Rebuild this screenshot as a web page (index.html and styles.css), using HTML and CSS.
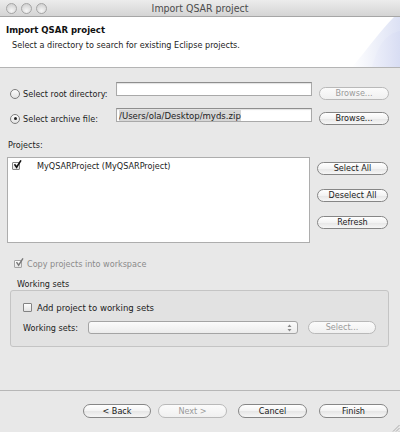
FILE: index.html
```html
<!DOCTYPE html>
<html>
<head>
<meta charset="utf-8">
<title>Import QSAR project</title>
<link rel="stylesheet" href="styles.css">
</head>
<body>
<div class="window">
  <div class="titlebar">
    <div class="lights"><span class="light"></span><span class="light"></span><span class="light"></span></div>
    <div class="title">Import QSAR project</div>
    <div></div>
  </div>
  <div class="header">
    <div class="h-text">
      <div class="h-title">Import QSAR project</div>
      <div class="h-desc">Select a directory to search for existing Eclipse projects.</div>
    </div>
    <svg class="swoosh" width="70" height="50" viewBox="0 0 70 50">
      <defs>
        <linearGradient id="g1" x1="0" y1="0" x2="1" y2="0">
          <stop offset="0" stop-color="#ffffff"/>
          <stop offset="1" stop-color="#dce1f4"/>
        </linearGradient>
        <linearGradient id="g2" x1="0" y1="0" x2="1" y2="0">
          <stop offset="0" stop-color="#eef0fa"/>
          <stop offset="1" stop-color="#d8ddf3"/>
        </linearGradient>
      </defs>
      <path d="M70 0 L64 0 C50 14 36 34 22 50 L70 50 Z" fill="url(#g1)"/>
      <path d="M70 14 C58 16 48 26 42 50 L70 50 Z" fill="url(#g2)"/>
    </svg>
  </div>
  <div class="content">
    <div class="src-row">
      <div class="opt"><span class="radio"></span><span>Select root directory:</span></div>
      <div class="field field-1"></div>
      <div class="btn disabled">Browse...</div>
    </div>
    <div class="src-row">
      <div class="opt"><span class="radio checked"></span><span>Select archive file:</span></div>
      <div class="field field-2"><span class="sel">/Users/ola/Desktop/myds.zip</span></div>
      <div class="btn">Browse...</div>
    </div>
    <div class="projects-label">Projects:</div>
    <div class="projects">
      <div class="list">
        <div class="item"><span class="check checked"><svg width="9" height="9" viewBox="0 0 9 9"><path d="M1.5 4.2 L3.6 7.2 L8 0.4" fill="none" stroke="#111" stroke-width="1.6"/></svg></span><span class="item-text">MyQSARProject (MyQSARProject)</span></div>
      </div>
      <div class="side-buttons">
        <div class="btn">Select All</div>
        <div class="btn">Deselect All</div>
        <div class="btn">Refresh</div>
      </div>
    </div>
    <div class="copy-row"><span class="check small checked dim"><svg width="9" height="9" viewBox="0 0 9 9"><path d="M1.5 4.2 L3.6 7.2 L8 0.4" fill="none" stroke="#777" stroke-width="1.4"/></svg></span><span>Copy projects into workspace</span></div>
    <div class="ws-label">Working sets</div>
    <div class="group">
      <div class="add-row"><span class="check"></span><span>Add project to working sets</span></div>
      <div class="ws-row">
        <span class="ws-text">Working sets:</span>
        <div class="combo"><span class="stepper"><svg width="5" height="8" viewBox="0 0 5 8"><path d="M0.5 3 L2.5 0.5 L4.5 3 Z M0.5 5 L2.5 7.5 L4.5 5 Z" fill="#8a8a8a"/></svg></span></div>
        <div class="btn disabled">Select...</div>
      </div>
    </div>
  </div>
  <div class="footer">
    <div class="btn back">&lt; Back</div>
    <div class="btn disabled next">Next &gt;</div>
    <div class="btn cancel">Cancel</div>
    <div class="btn finish">Finish</div>
  </div>
  <svg class="grip" width="9" height="9" viewBox="0 0 9 9"><path d="M8.5 2 L2 8.5 M8.5 5 L5 8.5 M8.5 8 L8 8.5" stroke="#9c9c9c" stroke-width="0.8"/></svg>
</div>
</body>
</html>
```

FILE: styles.css
```css
* { box-sizing: border-box; margin: 0; padding: 0; }
html, body { width: 400px; height: 432px; overflow: hidden; }
body {
  font-family: "DejaVu Sans Condensed", "DejaVu Sans", sans-serif;
  font-size: 9px;
  color: #1c1c1c;
  background: #e8e8e8;
}
.window { display: flex; flex-direction: column; height: 432px; position: relative; }

.titlebar {
  height: 17px;
  display: grid;
  grid-template-columns: 1fr auto 1fr;
  align-items: center;
  background: linear-gradient(#ececec, #d4d4d4);
  border-bottom: 1px solid #a6a6a6;
}
.lights { display: flex; gap: 4px; padding-left: 6px; }
.light {
  width: 11px; height: 11px; border-radius: 50%;
  border: 1px solid #a5a5a5;
  background: radial-gradient(circle at 50% 75%, #f6f6f6, #d2d2d2 80%);
}
.title { font-size: 10.5px; color: #4c4c4c; }

.header {
  height: 51px;
  background: #fff;
  border-bottom: 1px solid #b4b4b4;
  display: flex;
  justify-content: space-between;
}
.h-text { padding: 7px 0 0 6px; }
.h-title { font-weight: bold; font-size: 9.5px; line-height: 12px; color: #111; }
.h-desc { line-height: 12px; margin-top: 3px; padding-left: 6px; }
.swoosh { display: block; flex: none; }

.content { flex: 1; padding: 14px 11px 0 7px; display: flex; flex-direction: column; }

.src-row { display: flex; align-items: flex-end; }
.src-row + .src-row { margin-top: 8px; }
.opt { width: 109px; display: flex; align-items: center; gap: 3px; padding-left: 3px; height: 13px; }
.radio {
  width: 10px; height: 10px; border-radius: 50%; flex: none;
  border: 1px solid #7d7d7d;
  background: linear-gradient(#fdfdfd, #e2e2e2);
  position: relative;
}
.radio.checked::after {
  content: ""; position: absolute; left: 2.5px; top: 2.5px;
  width: 3px; height: 3px; border-radius: 50%; background: #222;
}
.field {
  width: 196px; height: 14px;
  background: #fff;
  border: 1px solid #a9a9a9;
  border-top-color: #8e8e8e;
  box-shadow: inset 0 1px 1px rgba(0,0,0,0.12);
  padding: 1px 2px;
  font-size: 9.5px;
  line-height: 11px;
}
.field-1 { margin-bottom: 4px; }
.field-2 { margin-bottom: 3px; }
.sel { background: #d6d6d6; color: #222; }

.btn {
  width: 70px; height: 13px;
  margin-left: auto;
  border: 1px solid #868686;
  border-radius: 7px;
  background: linear-gradient(#ffffff, #f3f3f3 50%, #e6e6e6 51%, #f6f6f6);
  text-align: center;
  line-height: 11px;
  font-size: 9px;
  color: #1a1a1a;
}
.btn.disabled { border-color: #b9b9b9; color: #9a9a9a; background: linear-gradient(#fbfbfb, #f0f0f0); }

.projects-label { margin-top: 14px; padding-left: 1px; line-height: 12px; }
.projects { display: flex; margin-top: 6px; }
.list {
  width: 303px; height: 86px;
  background: #fff;
  border: 1px solid #adadad;
  padding: 3px 0 0 4px;
}
.item { display: flex; align-items: center; height: 9px; }
.item-text { margin-left: 17px; }
.check {
  width: 8px; height: 8px; flex: none;
  border: 1px solid #838383;
  border-radius: 1px;
  background: linear-gradient(#fefefe, #e4e4e4);
  position: relative;
}
.check svg { position: absolute; left: 0; top: -3px; }
.check.dim { border-color: #a3a3a3; }
.side-buttons { display: flex; flex-direction: column; gap: 14px; padding-top: 5px; margin-left: 7px; }
.side-buttons .btn { width: 71px; }

.copy-row { display: flex; align-items: center; gap: 5px; margin-top: 15px; padding-left: 7px; height: 12px; color: #8b8b8b; }
.ws-label { margin-top: 9px; padding-left: 10px; line-height: 11px; }
.group {
  margin-left: 3px;
  width: 379px; height: 57px;
  border: 1px solid #c4c4c4;
  border-radius: 3px;
  background: #e2e2e2;
  padding: 11px 0 0 12px;
}
.add-row { display: flex; align-items: center; gap: 5px; height: 10px; font-size: 9.5px; }
.add-row .check { width: 9px; height: 9px; }
.ws-row { display: flex; align-items: center; margin-top: 9px; padding-left: 0; }
.ws-text { width: 65px; }
.combo {
  width: 210px; height: 13px;
  border: 1px solid #a4a4a4;
  border-radius: 3px;
  background: linear-gradient(#fbfbfb, #ececec);
  display: flex; justify-content: flex-end; align-items: center;
  padding-right: 5px;
}
.stepper { display: flex; }
.stepper svg { display: block; }
.ws-row .btn { margin-left: 10px; width: 68px; }

.footer {
  height: 42px;
  border-top: 1px solid #b7b7b7;
  display: flex;
  justify-content: flex-end;
  align-items: flex-start;
  padding: 13px 12px 0 0;
}
.footer .btn { margin-left: 0; width: 69px; height: 14px; line-height: 12px; }
.footer .back { width: 68px; }
.footer .next { margin-left: 7px; }
.footer .cancel { margin-left: 11px; }
.footer .finish { margin-left: 12px; }

.grip { position: absolute; right: 0; bottom: 0; }
```
